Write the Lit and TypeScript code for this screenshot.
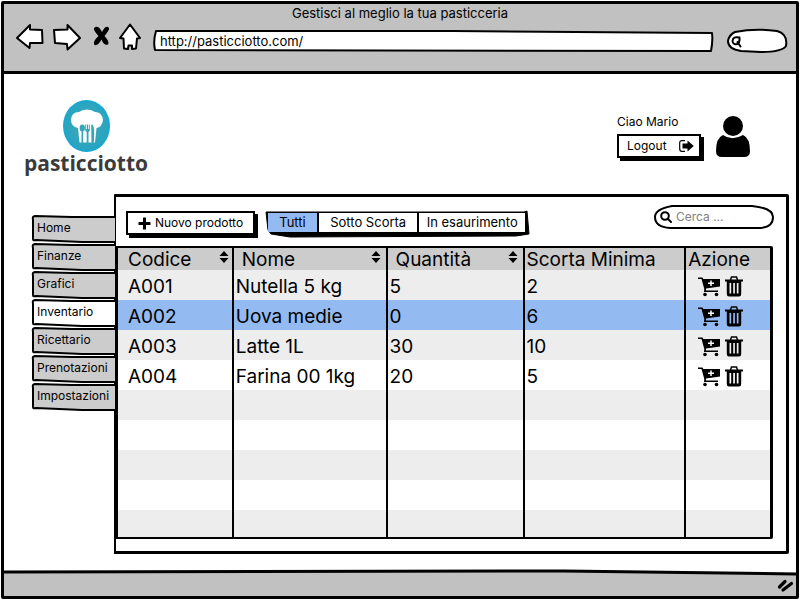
import { LitElement, html, svg, css } from "lit";
import { customElement, state } from "lit/decorators.js";
import { classMap } from "lit/directives/class-map.js";

interface Product {
  code: string;
  name: string;
  quantity: number;
  minimum: number;
}

const PRODUCTS: Product[] = [
  { code: "A001", name: "Nutella 5 kg", quantity: 5, minimum: 2 },
  { code: "A002", name: "Uova medie", quantity: 0, minimum: 6 },
  { code: "A003", name: "Latte 1L", quantity: 30, minimum: 10 },
  { code: "A004", name: "Farina 00 1kg", quantity: 20, minimum: 5 },
];

const EMPTY_ROWS = [0, 1, 2, 3, 4];

const SECTIONS = ["Home", "Finanze", "Grafici", "Inventario", "Ricettario", "Prenotazioni", "Impostazioni"];

const FILTERS = ["Tutti", "Sotto Scorta", "In esaurimento"];

const COLUMNS = [
  { label: "Codice", sortable: true, width: "17.6%" },
  { label: "Nome", sortable: true, width: "23.6%" },
  { label: "Quantità", sortable: true, width: "21%" },
  { label: "Scorta Minima", sortable: false, width: "24.8%" },
  { label: "Azione", sortable: false, width: "13%" },
];

const backIcon = html`<svg width="28" height="28" viewBox="16 23 28 28" aria-hidden="true">
  <path class="outline" d="M17 38 L30 25 L30 29.5 L42 30 L42.5 43 L30 43 L29.5 48 Z" />
</svg>`;

const forwardIcon = html`<svg width="28" height="28" viewBox="53 23 28 28" aria-hidden="true">
  <path class="outline" d="M54 30 L67.5 29.5 L67.5 25 L80 38 L67.5 49.5 L67 44 L55 43 Z" />
</svg>`;

const stopIcon = html`<svg width="20" height="28" viewBox="90 23 20 28" aria-hidden="true">
  <path d="M94 28 Q98 24 102 32 Q106 24 109 28 Q110 29 104.500 36 Q110 42 108 44.500 Q104 46 101.500 39.500 Q98 46 94.500 45 Q92 42 98.500 36 Q93 30 94 28 Z" />
</svg>`;

const homeIcon = html`<svg width="22" height="28" viewBox="119 23 22 28" aria-hidden="true">
  <path class="outline" d="M130 24.5 L140 38 L137 38.500 L136 48.500 L132 49 L132 45.500 L128.500 45.500 L128 49 L124 48.500 L123.500 38.500 L120 38 Z" />
</svg>`;

const smallLens = html`<svg width="11" height="12" viewBox="0 0 11 12" aria-hidden="true">
  <path class="lens" d="M8 1.500 Q2 0 1.500 5 Q2 9 6 8 Q9 7 8.500 1.500 M6.500 6 L9.500 10.500" />
</svg>`;

const lens = html`<svg width="12" height="12" viewBox="0 0 12 12" aria-hidden="true">
  <circle class="lens" cx="5" cy="5" r="3.800" />
  <path class="lens" d="M7.800 7.800 L11 11" />
</svg>`;

const plusIcon = html`<svg width="13" height="13" viewBox="0 0 13 13" aria-hidden="true">
  <path d="M5 1 Q5 .5 5.500 .5 H7.500 Q8 .5 8 1 V5 H12 Q12.500 5 12.500 5.500 V7.500 Q12.500 8 12 8 H8 V12 Q8 12.500 7.500 12.500 H5.500 Q5 12.500 5 12 V8 H1 Q.5 8 .5 7.500 V5.500 Q.5 5 1 5 H5 Z" />
</svg>`;

const logoutIcon = html`<svg width="15" height="12" viewBox="0 0 15 12" aria-hidden="true">
  <path d="M6 .6 H3 Q.7 .6 .7 3 V9 Q.7 11.400 3 11.400 H6" fill="none" stroke="#000" stroke-width="1.200" />
  <path d="M3.500 3.500 H8.500 V.5 L14.800 6 L8.500 11.500 V8.500 H3.500 Z" />
</svg>`;

const userIcon = html`<svg width="34" height="41" viewBox="0 0 34 41" aria-hidden="true">
  <circle cx="17" cy="10" r="10" />
  <path d="M7 19 Q16 25.500 27 19 Q34 22 34 35 Q34 41 28 41 H6 Q0 41 0 35 Q0 22 7 19 Z" />
</svg>`;

const sortIcon = html`<svg width="10" height="12" viewBox="0 0 10 12" aria-hidden="true">
  <path d="M5 0 L9.500 5 H.5 Z M.5 7 H9.500 L5 12 Z" />
</svg>`;

const cartIcon = html`<svg width="22" height="20" viewBox="0 0 22 20" aria-hidden="true">
  <path d="M0 .5 H4.500 L5.300 2 H22 V9.500 L8 11.500 L8 13.500 H20 V15 H6 L6.300 12 L3.500 2 H0 Z" />
  <circle cx="7" cy="17.500" r="1.800" />
  <circle cx="18.500" cy="17.500" r="1.800" />
  <path d="M13 3.500 V9 M10 6.200 H16" stroke="#fff" stroke-width="1.500" />
</svg>`;

const trashIcon = html`<svg width="18" height="21" viewBox="0 0 18 21" aria-hidden="true">
  <path d="M5.500 4 L6.500 1 H11.500 L12.500 4" fill="none" stroke="#000" stroke-width="1.500" />
  <path
    fill-rule="evenodd"
    d="M0 3.500 H18 V5.500 H16.200 V18 Q16.200 20.500 14 20.500 H4 Q1.800 20.500 1.800 18 V5.500 H0 Z M4.500 7 V17.500 H6.200 V7 Z M8.200 7 V17.500 H9.900 V7 Z M11.800 7 V17.500 H13.500 V7 Z"
  />
</svg>`;

const chefLogo = html`<svg width="47" height="52" viewBox="63 100 47 52" aria-hidden="true">
  <defs>
    <radialGradient id="disc">
      <stop offset="0.500" stop-color="#37a6ba" />
      <stop offset="0.900" stop-color="#27a5c2" />
      <stop offset="1" stop-color="#10a9d8" />
    </radialGradient>
  </defs>
  <ellipse cx="86.500" cy="126" rx="23.500" ry="26" fill="url(#disc)" />
  <path
    fill="#fff"
    d="M78 128 Q71 127 71 119.500 Q71.500 112 79 112 Q82 109.500 87 109.500 Q92 109.500 95 112 Q102 112 103 120 Q102 127 96.500 128 L95 142.500 H79.500 Z"
  />
  <g fill="#37a6ba">
    <ellipse cx="82.300" cy="128" rx="2.700" ry="3.500" />
    <path d="M81.500 130 H83.200 V143 H81.500 Z" />
    <path d="M85.200 124.500 H86.200 V129 H87 V124.500 H88 V129 H88.800 V124.500 H89.800 V130 Q89.800 131.500 88.500 132 V143 H86.700 V132 Q85.200 131.500 85.200 130 Z" />
    <path d="M92 124.500 Q94.300 125 94.200 134 L93.800 143 H91.500 L91.200 125 Z" />
  </g>
</svg>`;

const grip = html`<svg class="grip" width="18" height="14" viewBox="0 0 18 14" aria-hidden="true">
  <path d="M3.500 8 L9 2.500 M7 11 L15.500 4.500" fill="none" stroke="#000" stroke-width="3.200" stroke-linecap="round" />
</svg>`;

/** Hand-drawn outline stretched behind the box that contains it. */
const outline = (width: number, height: number, shape: unknown) => html`<svg
  class="sketch"
  viewBox="0 0 ${width} ${height}"
  preserveAspectRatio="none"
  aria-hidden="true"
>
  ${shape}
</svg>`;

@customElement("app-root")
export class AppRoot extends LitElement {
  @state() private section = "Inventario";
  @state() private filter = "Tutti";
  @state() private selected = "A002";

  static styles = css`
    :host {
      display: block;
      box-sizing: border-box;
      min-height: 100vh;
      padding: 1px;
      background: #fff;
      color: #000;
      font: 400 12px/18px Inter, "Open Sans", sans-serif;
    }
    * {
      box-sizing: border-box;
    }
    svg {
      display: block;
      flex: none;
    }
    button,
    input {
      margin: 0;
      padding: 0;
      border: 0;
      background: none;
      color: inherit;
      font: inherit;
    }
    button {
      cursor: pointer;
    }
    input {
      min-width: 0;
      outline: none;
    }
    .outline {
      fill: #fff;
      stroke: #000;
      stroke-width: 2;
      stroke-linejoin: round;
    }
    .lens {
      fill: none;
      stroke: #000;
      stroke-width: 2;
      stroke-linecap: round;
    }
    .sketch {
      position: absolute;
      inset: 0;
      width: 100%;
      height: 100%;
      overflow: visible;
      z-index: -1;
    }
    .sketch path {
      vector-effect: non-scaling-stroke;
      stroke: #000;
      stroke-width: 2;
      stroke-linejoin: round;
    }
    .window {
      display: flex;
      flex-direction: column;
      min-height: calc(100vh - 2px);
      border: 3px solid #000;
      border-radius: 2px;
    }
    .chrome {
      padding-bottom: 19px;
      border-bottom: 3px solid #000;
      background: #c1c1c1;
    }
    .title {
      margin: 0;
      padding-bottom: 1px;
      font-size: 13px;
      font-weight: 400;
      text-align: center;
    }
    .bar {
      display: flex;
      align-items: flex-end;
      gap: 12px;
      padding: 0 9px 0 12px;
    }
    .nav {
      display: flex;
      gap: 9px;
      padding-bottom: 1px;
    }
    .address,
    .find,
    .search {
      position: relative;
      z-index: 0;
      display: flex;
      align-items: center;
    }
    .address {
      flex: 1;
      height: 21px;
      padding: 0 7px 2px;
      font-size: 13px;
    }
    .address input {
      width: 100%;
    }
    .find {
      width: 60px;
      height: 23px;
      margin-left: 2px;
      padding-left: 4px;
    }
    .find svg:not(.sketch) {
      margin-top: 3px;
    }
    .find input {
      width: 36px;
    }
    .content {
      flex: 1;
      display: flex;
      flex-direction: column;
    }
    .masthead {
      display: flex;
      justify-content: space-between;
      height: 120px;
      padding: 26px 46px 0 18px;
    }
    .brand {
      display: flex;
      flex-direction: column;
      align-items: center;
      width: 128px;
      height: 80px;
      color: #3b3b3b;
      font: 700 21px/22px "Open Sans", sans-serif;
      text-decoration: none;
    }
    .account {
      display: flex;
      align-items: flex-start;
      gap: 15px;
      padding-top: 13px;
    }
    .account > svg {
      margin-top: 3px;
    }
    .greeting {
      margin: 0 0 3px;
    }
    .button {
      display: flex;
      align-items: center;
      height: 24px;
      border: 2px solid #000;
      box-shadow: 3px 3px 0 #000;
      background: #fff;
    }
    .logout {
      gap: 12px;
      width: 84px;
      padding: 0 5px 0 8px;
      justify-content: space-between;
    }
    .workspace {
      flex: 1;
      display: flex;
      margin: 0 7px 17px 28px;
    }
    .tabs {
      flex: none;
      display: flex;
      flex-direction: column;
      gap: 1px;
      width: 82px;
      padding-top: 21px;
    }
    .tab {
      position: relative;
      z-index: 0;
      height: 27px;
      padding-left: 5px;
      color: #000;
      line-height: 26px;
      text-decoration: none;
      white-space: nowrap;
    }
    .tab path {
      fill: #ccc;
    }
    .tab.current path {
      fill: #fff;
    }
    .panel {
      flex: 1;
      min-width: 0;
      display: flex;
      flex-direction: column;
      border: 3px solid #000;
      border-left-width: 2px;
      border-radius: 1px 2px 2px 0;
      padding-bottom: 12px;
      background: #fff;
    }
    .tools {
      display: flex;
      align-items: flex-start;
      height: 49px;
      padding: 8px 13px 0 10px;
    }
    .create {
      gap: 4px;
      width: 129px;
      margin-top: 6px;
      padding: 0 10px;
      white-space: nowrap;
      justify-content: center;
    }
    .filters {
      position: relative;
      z-index: 0;
      display: flex;
      width: 263px;
      height: 27px;
      margin: 5px 0 0 11px;
      padding: 3px 4px 5px 2px;
      font-size: 13px;
    }
    .filters .sketch path {
      fill: #000;
      stroke-width: 1;
    }
    .filter {
      flex: 1 0 auto;
      background: #fff;
      padding: 0 10px;
      line-height: 19px;
    }
    .filter:last-of-type {
      padding: 0 6px;
    }
    .filter + .filter {
      border-left: 2px solid #000;
    }
    .filter.current {
      background: #94baf2;
    }
    .search {
      width: 119px;
      height: 24px;
      gap: 4px;
      margin-left: auto;
      padding: 0 10px 0 6px;
    }
    .search input {
      flex: 1;
      width: 60px;
    }
    .search input::placeholder {
      color: #808080;
      opacity: 1;
    }
    .sheet {
      flex: 1;
      width: calc(100% - 13px);
      border: 2px solid #000;
      border-right-width: 3px;
      border-radius: 0 2px 2px 0;
    }
    table {
      width: 100%;
      border-collapse: collapse;
      table-layout: fixed;
      font-size: 19px;
    }
    th,
    td {
      padding: 0 0 0 2px;
      font-weight: 400;
      text-align: left;
      white-space: nowrap;
      overflow: hidden;
    }
    th + th,
    td + td {
      border-left: 2px solid #000;
    }
    th:first-child,
    td:first-child {
      padding-left: 10px;
    }
    th {
      height: 22px;
      padding-top: 2px;
      background: #ccc;
      line-height: 20px;
    }
    td {
      height: 30px;
      padding-top: 3px;
      line-height: 27px;
    }
    tbody tr:last-child td {
      height: 27px;
    }
    tbody tr:nth-child(odd) {
      background: #ededed;
    }
    tbody tr.selected {
      background: #94baf2;
    }
    .sort {
      display: flex;
      align-items: flex-start;
      justify-content: space-between;
      width: 100%;
      padding: 0 5px 0 6px;
      line-height: 20px;
    }
    .sort svg {
      margin-top: 1px;
    }
    th:first-child .sort {
      padding: 0 3px 0 0;
    }
    .actions {
      display: flex;
      align-items: center;
      gap: 5px;
      height: 27px;
      padding-left: 10px;
    }
    .status {
      position: relative;
      z-index: 0;
      display: flex;
      align-items: center;
      justify-content: flex-end;
      height: 25px;
      background: #c1c1c1;
      padding: 4px 2px 0 0;
    }
    .edge {
      position: absolute;
      inset: 0;
      width: 100%;
      height: 100%;
      overflow: visible;
    }
  `;

  private renderRow(product: Product) {
    return html`<tr
      class=${classMap({ selected: product.code === this.selected })}
      @click=${() => (this.selected = product.code)}
    >
      <td>${product.code}</td>
      <td>${product.name}</td>
      <td>${product.quantity}</td>
      <td>${product.minimum}</td>
      <td>
        <div class="actions">
          <button type="button" aria-label="Ordina ${product.name}">${cartIcon}</button>
          <button type="button" aria-label="Elimina ${product.name}">${trashIcon}</button>
        </div>
      </td>
    </tr>`;
  }

  render() {
    return html`<div class="window">
      <header class="chrome">
        <h1 class="title">Gestisci al meglio la tua pasticceria</h1>
        <div class="bar">
          <div class="nav">
            <button type="button" aria-label="Indietro">${backIcon}</button>
            <button type="button" aria-label="Avanti">${forwardIcon}</button>
            <button type="button" aria-label="Interrompi">${stopIcon}</button>
            <button type="button" aria-label="Pagina iniziale">${homeIcon}</button>
          </div>
          <div class="address">
            ${outline(560, 21, svg`<path fill="#fff" d="M3 0 L300 0 L559 2 Q560 10 558 20 L2 19 Q0 10 3 0 Z" />`)}
            <input type="text" aria-label="Indirizzo" .value=${"http://pasticciotto.com/"} />
          </div>
          <div class="find">
            ${outline(60, 23, svg`<path fill="#fff" d="M8 3 Q28 -1 50 2 Q61 5 59 17 Q55 23 34 23 L14 22 Q1 20 1 12 Q2 6 8 3 Z" />`)}
            ${smallLens}
            <input type="text" aria-label="Cerca nel web" />
          </div>
        </div>
      </header>

      <main class="content">
        <div class="masthead">
          <a class="brand" href="#home">${chefLogo}<span>pasticciotto</span></a>
          <div class="account">
            <div>
              <p class="greeting">Ciao Mario</p>
              <button type="button" class="button logout">Logout ${logoutIcon}</button>
            </div>
            ${userIcon}
          </div>
        </div>

        <div class="workspace">
          <nav class="tabs">
            ${SECTIONS.map(
              (name) => html`<a
                class=${classMap({ tab: true, current: name === this.section })}
                href="#${name.toLowerCase()}"
                @click=${() => (this.section = name)}
              >
                ${outline(82, 27, svg`<path d="M83 2 L40 2 L3 1 Q0 1 1 5 L1 24 Q1 26 4 25 L50 27 L83 27" />`)}${name}
              </a>`,
            )}
          </nav>

          <section class="panel">
            <div class="tools">
              <button type="button" class="button create">${plusIcon}Nuovo prodotto</button>
              <div class="filters">
                ${outline(263, 27, svg`<path d="M0 2 L258 2 L261 1 L263 24 L250 26 L24 27 L5 24 L2 20 Z" />`)}
                ${FILTERS.map(
                  (name) => html`<button
                    type="button"
                    class=${classMap({ filter: true, current: name === this.filter })}
                    @click=${() => (this.filter = name)}
                  >
                    ${name}
                  </button>`,
                )}
              </div>
              <div class="search">
                ${outline(119, 24, svg`<path fill="#fff" d="M18 1 L98 1 Q119 3 119 12 Q119 23 104 23 L16 23 Q1 22 1 12 Q1 4 18 1 Z" />`)}
                ${lens}
                <input type="text" aria-label="Cerca prodotto" placeholder="Cerca ..." />
              </div>
            </div>
            <div class="sheet">
              <table>
                <colgroup>
                  ${COLUMNS.map((column) => html`<col style="width: ${column.width}" />`)}
                </colgroup>
                <thead>
                  <tr>
                    ${COLUMNS.map(
                      (column) => html`<th scope="col">
                        ${column.sortable
                          ? html`<button type="button" class="sort">${column.label}${sortIcon}</button>`
                          : column.label}
                      </th>`,
                    )}
                  </tr>
                </thead>
                <tbody>
                  ${PRODUCTS.map((product) => this.renderRow(product))}
                  ${EMPTY_ROWS.map(() => html`<tr>${COLUMNS.map(() => html`<td></td>`)}</tr>`)}
                </tbody>
              </table>
            </div>
          </section>
        </div>
      </main>

      <footer class="status">
        <svg class="edge" viewBox="0 0 792 25" preserveAspectRatio="none" aria-hidden="true">
          <path d="M0 -1 H560 L792 2 V-8 H0 Z" fill="#fff" />
          <path d="M0 1 L560 0 L792 3" fill="none" stroke="#000" stroke-width="3" />
        </svg>
        ${grip}
      </footer>
    </div>`;
  }
}
